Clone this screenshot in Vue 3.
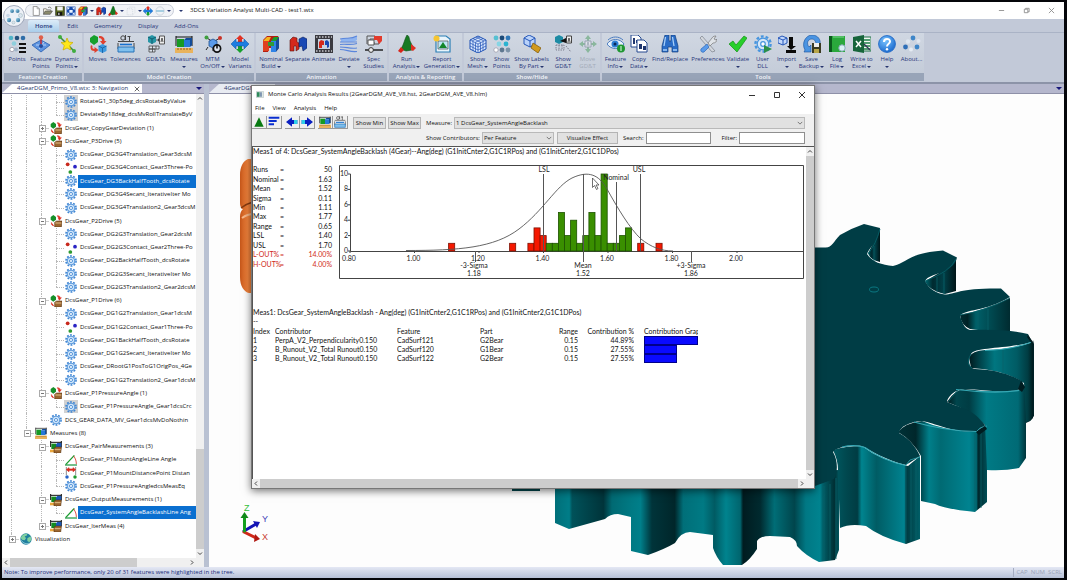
<script setup>
import { ref } from 'vue'

const quick = [
  { i: 'doc' }, { i: 'open' }, { i: 'disk' }, { i: 'fit' }, { i: 'build', d: 1 },
  { i: 'separate' }, { i: 'run', d: 1 }, { i: 'ghost', d: 1 }, { i: 'variants' }, { i: 'sphere', d: 1 }
]
const tabs = ['Home', 'Edit', 'Geometry', 'Display', 'Add-Ons']
const groups = [
  { name: 'Feature Creation', items: [
    { i: 'points', l: ['Points'], w: 24 },
    { i: 'feature', l: ['Feature', 'Points'], w: 24 },
    { i: 'dynamic', l: ['Dynamic', 'Points'], w: 28, d: 1 }] },
  { name: 'Model Creation', items: [
    { i: 'moves', l: ['Moves'], w: 25 },
    { i: 'tol', l: ['Tolerances'], w: 31 },
    { i: 'gdt', l: ['GD&Ts'], w: 29 },
    { i: 'measure', l: ['Measures', ''], w: 28, d: 1 },
    { i: 'mtm', l: ['MTM', 'On/Off'], w: 29, d: 1 },
    { i: 'variants', l: ['Model', 'Variants'], w: 26 }] },
  { name: 'Animation', items: [
    { i: 'build', l: ['Nominal', 'Build'], w: 28, d: 1 },
    { i: 'separate', l: ['Separate'], w: 25 },
    { i: 'animate', l: ['Animate'], w: 27 },
    { i: 'deviate', l: ['Deviate', ''], w: 24, d: 1 },
    { i: 'spec', l: ['Spec', 'Studies'], w: 25 }] },
  { name: 'Analysis & Reporting', items: [
    { i: 'run', l: ['Run', 'Analysis'], w: 33, d: 1 },
    { i: 'report', l: ['Report', 'Generation'], w: 38, d: 1 }] },
  { name: 'Show/Hide', items: [
    { i: 'mesh', l: ['Show', 'Mesh'], w: 25, d: 1 },
    { i: 'points2', l: ['Show', 'Points'], w: 23 },
    { i: 'labels', l: ['Show Labels', 'By Part'], w: 37, d: 1 },
    { i: 'showgdt', l: ['Show', 'GD&T'], w: 26 },
    { i: 'movegdt', l: ['Move', 'GD&T'], w: 23, off: true }] },
  { name: 'Tools', items: [
    { i: 'eye', l: ['Feature', 'Info'], w: 25, d: 1 },
    { i: 'copy', l: ['Copy', 'Data'], w: 22, d: 1 },
    { i: 'find', l: ['Find/Replace'], w: 40 },
    { i: 'prefs', l: ['Preferences'], w: 36 },
    { i: 'check', l: ['Validate', ''], w: 24, d: 1 },
    { i: 'dll', l: ['User', 'DLL'], w: 25 },
    { i: 'import', l: ['Import', ''], w: 23, d: 1 },
    { i: 'backup', l: ['Save', 'Backup'], w: 27, d: 1 },
    { i: 'log', l: ['Log', 'File'], w: 24, d: 1 },
    { i: 'excel', l: ['Write to', 'Excel'], w: 25, d: 1 },
    { i: 'help', l: ['Help', ''], w: 26, d: 1 },
    { i: 'about', l: ['About...'], w: 23 }] }
]

// Guide codes: | line, t branch, l last branch, + / - expander, m last open expander, p last closed expander
const tree = [
  ['|||t', 'gear', 'RotateG1_30p5deg_dcsRotateByValue', 'grey'],
  ['|||l', 'gear', 'DeviateBy18deg_dcsMvRollTranslateByV', 'grey'],
  ['||+', 'group', 'DcsGear_CopyGearDeviation (1)'],
  ['||-', 'group', 'DcsGear_P3Drive (5)'],
  ['|||t', 'gear', 'DcsGear_DG3G4Translation_Gear3dcsM'],
  ['|||t', 'dots', 'DcsGear_DG3G4Contact_Gear3Three-Po'],
  ['|||t', 'gear', 'DcsGear_DG3BackHalfTooth_dcsRotate', 'sel'],
  ['|||t', 'gear', 'DcsGear_DG3G4Secant_IterativeIter Mo'],
  ['|||l', 'gear', 'DcsGear_DG3G4Translation2_Gear3dcsM'],
  ['||-', 'group', 'DcsGear_P2Drive (5)'],
  ['|||t', 'gear', 'DcsGear_DG2G3Translation_Gear2dcsM'],
  ['|||t', 'dots', 'DcsGear_DG2G3Contact_Gear2Three-Po'],
  ['|||t', 'gear', 'DcsGear_DG2BackHalfTooth_dcsRotate'],
  ['|||t', 'gear', 'DcsGear_DG2G3Secant_IterativeIter Mo'],
  ['|||l', 'gear', 'DcsGear_DG2G3Translation2_Gear2dcsM'],
  ['||-', 'group', 'DcsGear_P1Drive (6)'],
  ['|||t', 'gear', 'DcsGear_DG1G2Translation_Gear1dcsM'],
  ['|||t', 'dots', 'DcsGear_DG1G2Contact_Gear1Three-Po'],
  ['|||t', 'gear', 'DcsGear_DG1BackHalfTooth_dcsRotate'],
  ['|||t', 'gear', 'DcsGear_DG1G2Secant_IterativeIter Mo'],
  ['|||t', 'gear', 'DcsGear_DRootG1PosToG1OrigPos_4Ge'],
  ['|||l', 'gear', 'DcsGear_DG1G2Translation2_Gear1dcsM'],
  ['||-', 'group', 'DcsGear_P1PressureAngle (1)'],
  ['|||l', 'gear', 'DcsGear_P1PressureAngle_Gear1dcsCrc', 'grey'],
  ['||l', 'gear', 'DCS_GEAR_DATA_MV_Gear1dcsMvDoNothin'],
  ['|m', 'measure', 'Measures (8)'],
  ['| -', 'mgroup', 'DcsGear_PairMeasurements (3)'],
  ['| |t', 'angle', 'DcsGear_P1MountAngleLine Angle'],
  ['| |t', 'dist', 'DcsGear_P1MountDistancePoint Distan'],
  ['| |l', 'gear', 'DcsGear_P1PressureAngledcsMeasEq'],
  ['| -', 'mgroup', 'DcsGear_OutputMeasurements (1)'],
  ['| |l', 'angle', 'DcsGear_SystemAngleBacklashLine Ang', 'sel'],
  ['| p', 'mgroup', 'DcsGear_IterMeas (4)'],
  ['p', 'globe', 'Visualization']
].map(([g, icon, text, state]) => ({ g: g.split(''), icon, text, state }))
const guideClass = {
  '|': 'g-line', ' ': '', t: 'g-line g-arm', l: 'g-half g-arm',
  '+': 'g-line g-box g-plus', '-': 'g-line g-box', m: 'g-half g-box', p: 'g-half g-box g-plus'
}

const stats = [
  ['Runs', '50'], ['Nominal', '1.63'], ['Mean', '1.52'], ['Sigma', '0.11'], ['Min', '1.11'], ['Max', '1.77'],
  ['Range', '0.65'], ['LSL', '1.40'], ['USL', '1.70'], ['L-OUT%', '14.00%', true], ['H-OUT%', '4.00%', true]
]

// Histogram bins: [bin offset from the first bin, count, out of spec]
const bins = [
  [-14, 1, 1], [-4, 1, 1], [-1, 1, 1], [0, 3, 1], [1, 2, 1], [2, 1], [3, 1], [4, 5], [5, 2], [6, 4], [7, 1], [8, 2],
  [9, 5], [10, 2], [11, 10], [12, 1], [13, 1], [14, 2], [15, 3], [17, 1, 1], [20, 1, 1]
].map(([k, n, red]) => ({ x: 195 + 6.1 * k, y: 86 - 7.7 * n, h: 7.7 * n, red }))
const yTicks = [0, 2, 4, 6, 8, 10].map(v => ({ v, y: 86 - 7.7 * v }))
const xTicks = [0, 1, 2, 3, 4, 5, 6].map(k => ({ v: (0.8 + 0.2 * k).toFixed(2), x: 11 + 64.5 * k }))
const marks = [
  { x: 204, a: 9, b: 86 }, { x: 244, a: 9, b: 97 }, { x: 277, a: 17, b: 86 },
  { x: 301, a: 9, b: 86 }, { x: 136, a: 86, b: 97 }, { x: 352, a: 86, b: 97 }
]

const contributors = [
  [1, 'PerpA_V2_Perpendicularity0.150', 'CadSurf121', 'G2Bear', '0.15', 44.89],
  [2, 'B_Runout_V2_Total Runout0.150', 'CadSurf120', 'G1Bear', '0.15', 27.55],
  [3, 'B_Runout_V2_Total Runout0.150', 'CadSurf122', 'G2Bear', '0.15', 27.55]
]
const search = ref('')
const filter = ref('')
</script>

<template>
  <div class="screen">
    <svg class="defs" aria-hidden="true">
      <defs>
        <linearGradient id="ball" x1="0" y1="0" x2="1" y2="1"><stop offset="0" stop-color="#a8dcf0" /><stop offset="1" stop-color="#1b5f8e" /></linearGradient>
        <radialGradient id="hlp" cx=".4" cy=".3" r=".8"><stop offset="0" stop-color="#7ac4ff" /><stop offset="1" stop-color="#0f5fc8" /></radialGradient>
        <symbol id="i-points" viewBox="0 0 18 18"><circle cx="3" cy="3" r="2.3" fill="#4fb3c8" /><circle cx="9" cy="3" r="2.3" fill="#23507c" /><circle cx="15" cy="3" r="2.3" fill="#2e6da8" /><circle cx="6" cy="8.5" r="2.3" fill="#8ecfdd" /><circle cx="4" cy="14.5" r="2.2" fill="#fff" stroke="#889" stroke-width=".7" /><circle cx="8" cy="14.500" r="2" fill="#9fb3c6" /><path d="M11 8h7v2h-7zM11 12h7v2h-7zM11 16h7v2h-7z" fill="#111" /></symbol>
        <symbol id="i-feature" viewBox="0 0 18 18"><path d="M0 10 9 5l9 5-9 7z" fill="#5c93e0" stroke="#2b5fae" stroke-width=".8" /><path d="M4 10h10M7 14l5-7" stroke="#b9d3f7" stroke-width="1" /><path d="M9 3v6" stroke="#c22" stroke-width="1.400" /><circle cx="9" cy="2.500" r="2.200" fill="#e0604a" /><circle cx="9" cy="11" r="2" fill="#254b9b" /></symbol>
        <symbol id="i-dynamic" viewBox="0 0 18 18"><path d="m2 2 14 14" stroke="#3a8a3a" stroke-width="1.500" /><circle cx="2" cy="2" r="2" fill="#3fae3f" /><circle cx="16" cy="16" r="2" fill="#3fae3f" /><path d="m9 3 1.700 4 4.300.5-3.300 3 1 4.500L9 13l-4 2 1.300-4.500-3.300-3L7.500 7z" fill="#ffe71a" stroke="#c9aa00" stroke-width=".7" /></symbol>
        <symbol id="i-moves" viewBox="0 0 18 18"><path d="m1 3 4-3 4 2v5L5 10 1 7z" fill="#16a02c" /><path d="M10 1c4 0 6 2 5.500 5l2 0-3.500 4-3-4h2c0-2-1-3-3-3zM2 10l-.5 2c0 3 1.500 4 4 4v2l4-3-4-3v2c-2 0-2.500-1-2-3z" fill="#e0412f" /><path d="m9.500 11 4-2 4 2v5l-4 2-4-2z" fill="#3d9ae0" /><path d="m9.500 11 4 2 4-2M13.500 13v5" stroke="#155a9a" fill="none" stroke-width=".8" /></symbol>
        <symbol id="i-tol" viewBox="0 0 18 18"><circle cx="6" cy="3" r="2.200" fill="none" stroke="#444" /><path d="M8.500 0v5M12.500 1v5M10.500 1.500h3" stroke="#444" /><path d="M1 8v6M17 8v6M1 6.500h16" stroke="#444" fill="none" /><path d="M3 9.500h12" stroke="#1570d0" stroke-width="1.600" /><path d="M1 12h16v5H1z" fill="#7fc0ee" stroke="#2873b8" /></symbol>
        <symbol id="i-gdt" viewBox="0 0 18 18"><path d="m1 2 4-2 4 2v5L5 9 1 7z" fill="#2696a6" /><path d="m1 2 4 2 4-2M5 4v5" stroke="#0b4d60" fill="none" stroke-width=".8" /><path d="M9 5h2l1.500-2v4L11 5" fill="#222" stroke="#222" stroke-width=".7" /><path d="M12.500 1h5v8h-5z" fill="#eee" stroke="#555" /><path d="M14 7l1-4 1 4" stroke="#333" fill="none" stroke-width=".8" /><path d="M2 11h10v3H2zM2 14h6v3H2zM5.500 11v6M9 11v3" fill="#dde4ee" stroke="#444" stroke-width=".8" /></symbol>
        <symbol id="i-measure" viewBox="0 0 18 18"><path d="M1 1v10M17 1v10M1 2h16" stroke="#111" /><path d="M2 4h7v8H2z" fill="#169a24" /><path d="M9 5h6v7H9z" fill="#2779d8" /><path d="m9 5 2-2h6v7l-2 2V5z" fill="#124c99" /><path d="M0 13h18v5H0z" fill="#e9b35d" /><path d="M3 13v2M6 13v2M9 13v2M12 13v2M15 13v2" stroke="#7a4a08" stroke-width=".8" /></symbol>
        <symbol id="i-mtm" viewBox="0 0 18 18"><path d="M9 7 3 3M9 7l7-4M9 8v8M4 12l-2 3" stroke="#222" stroke-width="1" /><circle cx="2.500" cy="2.500" r="2" fill="#3f9f3f" /><circle cx="16" cy="3" r="2" fill="#c93226" /><path d="m5 6 4-2 4 2v5l-4 2-4-2z" fill="#5b9bea" stroke="#205090" stroke-width=".8" /><circle cx="13" cy="13.500" r="3.600" fill="#dfe5ee" stroke="#111" stroke-width="1.700" /><path d="M13 9v4.500" stroke="#111" stroke-width="1.600" /></symbol>
        <symbol id="i-variants" viewBox="0 0 18 18"><path d="m9 0 4 4h-2v3H7V4H5z" fill="#e03022" /><path d="m9 18-4-4h2v-3h4v3h2z" fill="#17a02c" /><path d="M0 9l5-5v3h8V4l5 5-5 5v-3H5v3z" fill="#1d7de0" stroke="#0d4fa0" stroke-width=".5" /></symbol>
        <symbol id="i-build" viewBox="0 0 18 18"><path d="m1 5 4-4h11l1 2v10l-4 4H9v-4H7l-1 4H1z" fill="#b31e12" /><path d="M1 6h6v10H1z" fill="#e0401f" /><path d="m1 6 4-4h4L7 6z" fill="#f5b41c" /><path d="M9 6h5v11H9z" fill="#2f83e6" /><path d="m9 6 3-4h5l-3 4z" fill="#17a02c" /><path d="m14 6 3-4v11l-3 4z" fill="#164b98" /><path d="M6 7h6v4H6z" fill="#2f9a38" /></symbol>
        <symbol id="i-separate" viewBox="0 0 18 18"><path d="m1 5 3-3 4 1v4l2 1v6l-3 2V11H5v5H1z" fill="#d4281b" stroke="#5f0d0a" stroke-width=".6" /><path d="m10 4 4-2 4 2v9l-4 3-1-5-3 1z" fill="#1948b4" stroke="#0c205b" stroke-width=".6" /></symbol>
        <symbol id="i-animate" viewBox="0 0 18 18"><path d="M0 0h18v18H0z" fill="#3a3a40" /><path d="M3 4h12v10H3z" fill="#c9d3e2" /><path d="M1 2h16M1 16h16" stroke="#c8c8cc" stroke-width="1.500" stroke-dasharray="1.500 1.500" /><path d="m4 7 2-2 3 1v4H7v3H4z" fill="#d4281b" /><path d="m10 6 2-1 2 2v5l-2 1v-3h-2z" fill="#1948b4" /></symbol>
        <symbol id="i-deviate" viewBox="0 0 18 18"><path d="M1 4c6-2 9 1 16-3v4c-7 4-10 0-16 2z" fill="#8eb4f0" /><path d="M0 4c7-2 10 1 17-3M0 7h17M0 9.500c6-1 10 1 17-1M0 12c7 0 10 2 17 1M0 14.500c7 0 10 3 17 2" stroke="#5a86dc" stroke-width="1.200" fill="none" /></symbol>
        <symbol id="i-spec" viewBox="0 0 18 18"><path d="M2 1h8v3H5v4h5M2 1v8M7 9h7V6" fill="none" stroke="#555" /><path d="M9 1h8v5l-3 3-2-4H9z" fill="#e23a2c" /><path d="M3 5h6v5H3z" fill="#fff" stroke="#555" /><path d="M0 15h18" stroke="#222" stroke-width="1.500" /><circle cx="6" cy="15" r="2.400" fill="#eee" stroke="#333" /></symbol>
        <symbol id="i-run" viewBox="0 0 18 18"><path d="M9 0c2 1 2 2 3 6l3 6-1 3-6 1-5-2C6 9 7 3 9 0z" fill="#177a22" stroke="#0b4d14" stroke-width=".6" /><path d="m0 16 3-4 3 3-3 3z" fill="#d8241a" /><path d="m13 9 5 4-3 3-2-1z" fill="#e03024" /></symbol>
        <symbol id="i-report" viewBox="0 0 18 18"><path d="M3 1h10l4 3v13H3z" fill="#e8f4fb" stroke="#2b7fb5" stroke-width="1.200" /><path d="M5 6h10v8H5z" fill="#bfe6f5" stroke="#333" stroke-width=".6" /><path d="m6 13 4-6 4 6z" fill="#14852a" /><circle cx="3.500" cy="3.500" r="3" fill="#f6c531" /></symbol>
        <symbol id="i-mesh" viewBox="0 0 18 18"><path d="m1 5 8-4 8 4v9l-8 4-8-4z" fill="#dbe9ff" stroke="#1e50b4" /><path d="m1 5 8 4 8-4M9 9v9M1 8l8 4 8-4M1 11l8 4 8-4M4 6.500v9M6.500 8v9M11.500 8v9M14 6.500v9M4 3.500l8 4M7 2l8 4M14 3.500l-8 4M11 2 3 6" stroke="#1e50b4" fill="none" stroke-width=".7" /></symbol>
        <symbol id="i-points2" viewBox="0 0 18 18"><circle cx="3" cy="3" r="2.400" fill="#55c0d2" /><circle cx="9" cy="3" r="2.400" fill="#1b4a78" /><circle cx="15" cy="3" r="2.400" fill="#2e78b8" /><circle cx="6" cy="9" r="2.400" fill="#86d5e4" /><circle cx="13" cy="9" r="2.400" fill="#2bb3d0" /><circle cx="3" cy="15" r="2.200" fill="#fff" stroke="#889" stroke-width=".6" /><circle cx="9" cy="15" r="2.400" fill="#5f7890" /><circle cx="15" cy="15" r="2.400" fill="#7d93a8" /></symbol>
        <symbol id="i-labels" viewBox="0 0 18 18"><path d="m1 3 5-3 6 3v6l-5 3-6-3z" fill="#b9d2fa" stroke="#2456b8" /><path d="m1 3 6 3 5-3M7 6v6" stroke="#2456b8" fill="none" /><path d="m10 8 8 5-3 5-7-5z" fill="#d29a1e" stroke="#7a5506" stroke-width=".7" /></symbol>
        <symbol id="i-showgdt" viewBox="0 0 18 18"><path d="m1 2 4-2 4 2v5L5 9 1 7z" fill="#1d8ba4" /><path d="m6 6 6-3v5z" fill="#111" /><path d="M12.500 1h5v7h-5z" fill="#eee" stroke="#444" /><path d="M14 7l1-4 1 4" stroke="#333" fill="none" stroke-width=".8" /><path d="M2 10h8v5H2zM5 10v5M8 10v5M12 11l5 6" fill="none" stroke="#778" stroke-width=".9" stroke-dasharray="1.500 1" /></symbol>
        <symbol id="i-movegdt" viewBox="0 0 18 18"><path d="m9 0 3 4h-2v2H8V4H6zM9 18l-3-4h2v-2h2v2h2zM0 9l4-3v2h2v2H4v2zM18 9l-4 3v-2h-2V8h2V6z" fill="#8ab79d" /><path d="M6 6h6v6H6z" fill="#dfe3ea" stroke="#99a3b2" /><path d="M8 11l1-4 1 4" stroke="#99a3b2" fill="none" stroke-width=".8" /></symbol>
        <symbol id="i-eye" viewBox="0 0 18 18"><path d="M0 9c4-6 13-6 17 0-4 6-13 6-17 0z" fill="#e7f1fb" stroke="#4b7cc0" stroke-width="1" /><path d="M1 5c4-4 11-4 15 0" stroke="#4b7cc0" fill="none" /><circle cx="8" cy="9" r="3.500" fill="#2c7fd6" /><circle cx="8" cy="9" r="1.500" fill="#0b2a5c" /><circle cx="14" cy="13.500" r="4" fill="#1e9632" /><path d="M14 11v5" stroke="#b8e8c0" stroke-width="1.300" /></symbol>
        <symbol id="i-copy" viewBox="0 0 18 18"><path d="M1 0h7l3 3v9H1z" fill="#fff" stroke="#25498f" /><path d="M3 3h2v6H3zM6 5h3v3H6z" fill="#20366e" /><path d="M7 5h7l3 3v9H7z" fill="#fff" stroke="#25498f" /><path d="M9 9h3v5H9zM13 11h3v4h-3z" fill="#20366e" /></symbol>
        <symbol id="i-find" viewBox="0 0 18 18"><path d="M4 0h4v5l1 2 1-2V0h4l3 11v6h-6v-5H7v5H1v-6z" fill="#2a6cc6" stroke="#143f80" stroke-width=".7" /><path d="M4.500 2 3 11M11.500 2l1.500 9M2 15h4M12 15h4" stroke="#a8d0fa" stroke-width="1.300" /></symbol>
        <symbol id="i-prefs" viewBox="0 0 18 18"><path d="M3 1 1 3l12 14 3-1z" fill="#d3d7dd" stroke="#7d838d" stroke-width=".7" /><path d="M8 9 2 14c-1 2 1 4 3 3l5-5z" fill="#5b9bea" stroke="#1a5bb4" stroke-width=".6" /><path d="m9 8 4-5c1-2 3-2 4-2l-2 3 2 1 1-1c0 3-2 4-4 4l-3 3z" fill="#dfe3e8" stroke="#777" stroke-width=".7" /></symbol>
        <symbol id="i-check" viewBox="0 0 18 18"><path d="m0 9 4-3 3 4 8-9 3 2L8 17z" fill="#27cf2b" stroke="#129016" stroke-width=".7" /></symbol>
        <symbol id="i-gear" viewBox="0 0 18 18"><circle cx="9" cy="9" r="7.600" fill="none" stroke="#3f86d4" stroke-width="2.400" stroke-dasharray="2.800 1.975" /><circle cx="9" cy="9" r="5.800" fill="#cfe6fb" stroke="#3f86d4" stroke-width="1.300" /><circle cx="9" cy="9" r="2.300" fill="#fff" stroke="#3f86d4" stroke-width="1.300" /></symbol>
        <symbol id="i-dll" viewBox="0 0 18 18"><circle cx="9" cy="9" r="7.600" fill="none" stroke="#4795df" stroke-width="2.400" stroke-dasharray="2.800 1.975" /><circle cx="9" cy="9" r="5.800" fill="#d5e7f9" stroke="#4795df" stroke-width="1.200" /><circle cx="9" cy="9" r="2.300" fill="#fff" stroke="#4795df" stroke-width="1.200" /><path d="m10 10 8 4-8 4z" fill="#2a8f48" /></symbol>
        <symbol id="i-import" viewBox="0 0 18 18"><path d="m0 3 4-2 5 2v5l-4 2-5-2z" fill="#c2d8fb" stroke="#2456b8" /><path d="m0 3 5 2 4-2M5 5v5" stroke="#2456b8" fill="none" /><path d="M11 2h4v9h3l-5 4-4-4h2zM8 15h10v3H8z" fill="#0a0a0a" /></symbol>
        <symbol id="i-backup" viewBox="0 0 18 18"><path d="M2 15C-2 8 3 0 9 0s9 5 8 9h-4c0-3-2-5-4-5-4 0-6 4-3 8l2-2v7H1z" fill="#4a94e2" stroke="#154f9a" stroke-width=".6" /><path d="M9 8h9v10H9z" fill="#3a3a22" /><path d="M11 8h5v4h-5z" fill="#eee" /><path d="M11 14h5v4h-5z" fill="#b8a64a" /></symbol>
        <symbol id="i-log" viewBox="0 0 18 18"><path d="M1 1h16v16H1z" fill="#2aa83c" /><path d="M1 1h3v16H1z" fill="#0b5a1d" /><path d="M5 2h11" stroke="#7bd48d" /><circle cx="14" cy="13" r="3.200" fill="#d8f1f4" stroke="#8ab" /></symbol>
        <symbol id="i-excel" viewBox="0 0 18 18"><path d="M9 2h9v14H9z" fill="#f2f7f3" stroke="#1d7044" /><path d="M11 5h6M11 8h6M11 11h6M11 14h6" stroke="#1d8048" stroke-width="1.400" /><path d="m0 2 11-2v18L0 16z" fill="#17653b" /><path d="m3 6 5 6M8 6l-5 6" stroke="#fff" stroke-width="1.500" /><path d="m11 9 6 6" stroke="#335" stroke-width="1.200" /></symbol>
        <symbol id="i-help" viewBox="0 0 18 18"><circle cx="9" cy="9" r="8.400" fill="url(#hlp)" stroke="#2a6fc8" stroke-width="1" /><path d="M6 7c0-4 6-4 6-.5C12 9 9 8.500 9 11.500" stroke="#fff" stroke-width="2" fill="none" /><circle cx="9" cy="14.200" r="1.200" fill="#fff" /></symbol>
        <symbol id="i-about" viewBox="0 0 18 18"><circle cx="10" cy="3" r="2.400" fill="#3f86c8" /><circle cx="15.500" cy="6" r="2" fill="#dfe6ef" /><circle cx="5" cy="6.500" r="2.200" fill="#dfe6ef" /><circle cx="2.500" cy="12" r="2.400" fill="#2f6fb8" /><circle cx="8" cy="14.500" r="2" fill="#e6ecf3" /><circle cx="14" cy="12" r="2.400" fill="#3f86c8" /></symbol>
        <symbol id="i-doc" viewBox="0 0 18 18"><path d="M4 1h7l4 4v12H4z" fill="#fff" stroke="#777" stroke-width="1.300" /><path d="M11 1v4h4" fill="none" stroke="#777" /></symbol>
        <symbol id="i-open" viewBox="0 0 18 18"><path d="M1 15V5h5l1 2h7v3" fill="#fffbe8" stroke="#666" stroke-width="1.300" /><path d="m1 15 3-6h13l-4 6z" fill="#8b8a6c" stroke="#555" stroke-width="1.200" /><path d="M9 3c3-2 5-1 6 2" fill="none" stroke="#555" stroke-width="1.200" /></symbol>
        <symbol id="i-disk" viewBox="0 0 18 18"><path d="M1 1h16v16H1z" fill="#53631c" stroke="#222" /><path d="M4 1h10v7H4z" fill="#f3f3f3" /><path d="M4 11h9v6H4z" fill="#111" /><path d="M6 12h2v4H6z" fill="#eee" /></symbol>
        <symbol id="i-fit" viewBox="0 0 18 18"><path d="M1 1h16v16H1z" fill="#1a4eb0" /><path d="m2 2 5 1-4 4zM16 2l-5 1 4 4zM2 16l1-5 4 4zM16 16l-5-1 4-4zM6 7h6v5H6z" fill="#eaf3ff" /></symbol>
        <symbol id="i-ghost" viewBox="0 0 18 18"><path d="M2 5h10v11H2zM2 5l4-3h10v10l-4 4" fill="none" stroke="#c5ccd6" stroke-dasharray="2 1.500" /></symbol>
        <symbol id="i-sphere" viewBox="0 0 18 18"><circle cx="9" cy="9" r="7.500" fill="#f0f3f7" stroke="#b5becb" /><path d="M2 9h14" stroke="#4ea1c8" stroke-width="1.600" /></symbol>
        <symbol id="i-group" viewBox="0 0 18 18"><path d="m1 3 4-3 4 3v4L5 10 1 7z" fill="#15912a" /><path d="M11 1c3 0 4 1 4 3h2l-3 4-2-4h1c0-1-1-2-2-2zM2 11c0 4 1 5 4 5" fill="#dd2a1c" stroke="#dd2a1c" stroke-width=".8" /><path d="m7 11 3-2h8v2l-1 7H7z" fill="#9c6630" stroke="#4c2c0c" stroke-width=".8" /><path d="M8 12h9" stroke="#e2bd86" stroke-width="1.500" /></symbol>
        <symbol id="i-mgroup" viewBox="0 0 18 18"><path d="M1 0v9M17 0v9M1 2h16" stroke="#111" stroke-width="1.500" /><path d="M2 4h7v8H2z" fill="#128a20" /><path d="m9 5 2-2h6v8H9z" fill="#1b58b4" /><path d="M0 13h9v4H0z" fill="#e9a63d" /><path d="m6 11 3-2h8v2l-1 7H6z" fill="#9c6630" stroke="#4c2c0c" stroke-width=".8" /><path d="M7 13h9" stroke="#e2bd86" stroke-width="1.500" /></symbol>
        <symbol id="i-dots" viewBox="0 0 18 18"><circle cx="4" cy="3.500" r="2.800" fill="#c8281c" /><circle cx="15" cy="7" r="2.800" fill="#2a24c4" /><circle cx="8" cy="15" r="2.800" fill="#2c9a30" /></symbol>
        <symbol id="i-angle" viewBox="0 0 18 18"><path d="M1 16 14 2" stroke="#189a2c" stroke-width="2" /><path d="M0 16.500h18" stroke="#2f9f50" stroke-width="2" /><path d="M13 3c3 4 4 8 4 12" stroke="#d8281c" stroke-width="1.200" fill="none" /></symbol>
        <symbol id="i-dist" viewBox="0 0 18 18"><path d="M2 0v12M16 0v12" stroke="#555" /><path d="M2 4l4-3v2h6V1l4 3-4 3V5H6v2z" fill="#d8281c" stroke="#d8281c" /><circle cx="3" cy="15" r="2.600" fill="#2563c8" /><circle cx="15" cy="15" r="2.600" fill="#1f9a30" /></symbol>
        <symbol id="i-globe" viewBox="0 0 18 18"><circle cx="9" cy="9" r="8.500" fill="#1f7f9e" /><path d="M3 4c3-3 6-3 8-3l-1 3-3 1 2 3-2 3-4-1-2-3zM11 8l5-3 1 5-3 4-3-2z" fill="#7fd0a0" /><path d="M2 11c3 5 8 6 12 4" stroke="#bfe9f2" fill="none" /></symbol>
        <symbol id="i-win" viewBox="0 0 18 18"><path d="M0 1h18v16H0z" fill="#dfe9e6" stroke="#9aa" /><path d="M1 3h7v12H1z" fill="#2f8a5c" /><path d="M9 3h5v12H9z" fill="#3f5f8e" opacity=".6" /></symbol>
        <symbol id="i-tri" viewBox="0 0 18 18"><path d="m9 2 7 14H2z" fill="#087a12" /></symbol>
        <symbol id="i-bars" viewBox="0 0 18 18"><path d="M1 1h16v3H1zM1 6h12v3H1zM1 11h8v3H1z" fill="#0a2ed0" /></symbol>
        <symbol id="i-left" viewBox="0 0 18 18"><path d="m0 9 9-7v4h8v6H9v4z" fill="#0a1fc0" /><path d="M12 6h5v6h-5z" fill="#2fd0e8" /></symbol>
        <symbol id="i-right" viewBox="0 0 18 18"><path d="m18 9-9-7v4H1v6h8v4z" fill="#0a1fc0" /><path d="M1 6h5v6H1z" fill="#2fd0e8" /></symbol>
      </defs>
    </svg>

    <div class="app">
      <header class="titlebar">
        <button class="orb" aria-label="Application menu">
          <svg viewBox="0 0 22 22"><circle cx="11" cy="11" r="10.500" fill="#edf1f7" stroke="#8f99ad" stroke-width=".8" /><circle cx="9" cy="6" r="2" fill="url(#ball)" /><circle cx="14.500" cy="6" r="2" fill="url(#ball)" /><circle cx="5" cy="10.500" r="1.800" fill="#cbd8e8" /><circle cx="17.500" cy="10.500" r="2" fill="#dbe4ef" stroke="#8aa" stroke-width=".4" /><circle cx="6" cy="15" r="2.200" fill="url(#ball)" /><circle cx="10.500" cy="17.500" r="1.500" fill="#dbe4ef" stroke="#8aa" stroke-width=".4" /><circle cx="15" cy="15" r="2.200" fill="url(#ball)" /></svg>
        </button>
        <div class="quick">
          <button v-for="q in quick" :key="q.i" class="qbtn" :class="{ drop: q.d }" :aria-label="q.i">
            <svg class="qi"><use :href="'#i-' + q.i" /></svg><span v-if="q.d" class="caret"></span>
          </button>
        </div>
        <span class="caret customise"></span>
        <h1 class="apptitle">3DCS Variation Analyst Multi-CAD - test1.wtx</h1>
        <div class="winbtns main">
          <button aria-label="Minimize"><svg viewBox="0 0 8 8"><path d="M1 4h6" /></svg></button>
          <button aria-label="Restore"><svg viewBox="0 0 8 8"><path d="M1.500 2.500h4v4h-4zM3 2.500v-1h4v4H5.500" /></svg></button>
          <button aria-label="Close"><svg viewBox="0 0 8 8"><path d="m1 1 6 6M7 1 1 7" /></svg></button>
        </div>
      </header>

      <nav class="tabs">
        <button v-for="(t, n) in tabs" :key="t" :class="{ on: n === 0 }">{{ t }}</button>
      </nav>

      <div class="ribbon">
        <section v-for="g in groups" :key="g.name" class="group">
          <div class="items">
            <button v-for="b in g.items" :key="b.i" class="rbtn" :class="{ off: b.off }" :style="{ width: b.w + 'px' }">
              <svg class="ri"><use :href="'#i-' + b.i" /></svg>
              <span v-for="(l, n) in b.l" :key="n" class="lab">{{ l }}<i v-if="b.d && n === b.l.length - 1" class="caret"></i></span>
            </button>
          </div>
          <h2>{{ g.name }}</h2>
        </section>
      </div>

      <main class="work">
        <aside class="side">
          <div class="doctabs">
            <span class="doctab on">4GearDGM_Primo_V8.wtx: 3: Navigation<button class="tabx" aria-label="Close tab"><svg viewBox="0 0 8 8"><path d="m1 1 6 6M7 1 1 7" /></svg></button></span>
            <span class="caret big"></span>
          </div>
          <div class="sidebody">
            <ul class="tree">
              <li v-for="(r, n) in tree" :key="n">
                <span v-for="(c, k) in r.g" :key="k" class="guide" :class="guideClass[c]"></span>
                <span class="ticon" :class="r.state"><svg><use :href="'#i-' + r.icon" /></svg></span>
                <span class="ttext" :class="r.state">{{ r.text }}</span>
              </li>
            </ul>
            <div class="vbar tall">
              <svg viewBox="0 0 8 8"><path d="m2 5 2-2 2 2" /></svg><span class="gap"></span><span class="thumb"></span><svg viewBox="0 0 8 8"><path d="m2 3 2 2 2-2" /></svg>
            </div>
          </div>
          <div class="hbar">
            <svg viewBox="0 0 8 8"><path d="M5 2 3 4l2 2" /></svg><span class="thumb part"></span><span class="rest"></span><svg viewBox="0 0 8 8"><path d="m3 2 2 2-2 2" /></svg><span class="corner"></span>
          </div>
        </aside>

        <section class="view">
          <div class="doctabs second"><span class="doctab">4GearDGM</span><span class="caret big"></span></div>
          <svg class="scene" viewBox="209 94 855 473" preserveAspectRatio="xMinYMin meet" aria-label="Gear model">
            <defs>
              <linearGradient id="or" x1="0" x2="1"><stop offset="0" stop-color="#c4561a" /><stop offset=".35" stop-color="#f5853d" /><stop offset="1" stop-color="#e8742c" /></linearGradient>
              <linearGradient id="s1" x1="0" x2="1"><stop offset="0" stop-color="#006a72" /><stop offset=".25" stop-color="#002a30" /><stop offset=".6" stop-color="#014048" /><stop offset="1" stop-color="#001518" /></linearGradient>
              <linearGradient id="s3" x1="0" x2="1"><stop offset="0" stop-color="#002c32" /><stop offset=".15" stop-color="#002226" /><stop offset=".32" stop-color="#006069" /><stop offset="1" stop-color="#002b30" /></linearGradient>
              <linearGradient id="s4" x1="0" x2="1"><stop offset="0" stop-color="#00191d" /><stop offset=".15" stop-color="#003e45" /><stop offset=".4" stop-color="#007680" /><stop offset=".75" stop-color="#005b64" /><stop offset=".92" stop-color="#003c42" /><stop offset="1" stop-color="#001a1d" /></linearGradient>
              <linearGradient id="s5" x1="0" x2="1"><stop offset="0" stop-color="#001a1d" /><stop offset=".12" stop-color="#00454c" /><stop offset=".28" stop-color="#003c43" /><stop offset=".5" stop-color="#007a85" /><stop offset=".9" stop-color="#006a75" /><stop offset="1" stop-color="#00343a" /></linearGradient>
              <linearGradient id="s6" x1="0" x2="1"><stop offset="0" stop-color="#003238" /><stop offset=".2" stop-color="#00272b" /><stop offset=".35" stop-color="#007f8a" /><stop offset=".48" stop-color="#006a73" /><stop offset=".8" stop-color="#008390" /><stop offset=".88" stop-color="#006a74" /><stop offset=".9" stop-color="#00282d" /><stop offset="1" stop-color="#004e56" /></linearGradient>
              <linearGradient id="s7" x1="0" x2="1"><stop offset="0" stop-color="#005a62" /><stop offset=".15" stop-color="#00484f" /><stop offset=".28" stop-color="#003c43" /><stop offset=".33" stop-color="#00848f" /><stop offset=".5" stop-color="#005c64" /><stop offset=".82" stop-color="#008390" /><stop offset=".84" stop-color="#003a40" /><stop offset="1" stop-color="#005e67" /></linearGradient>
              <linearGradient id="bt" gradientUnits="userSpaceOnUse" x1="555" x2="840" y1="0" y2="0">
                <stop offset="0" stop-color="#006f79" /><stop offset=".05" stop-color="#007d88" /><stop offset=".06" stop-color="#00525a" /><stop offset=".17" stop-color="#00343a" /><stop offset=".2" stop-color="#006a73" /><stop offset=".27" stop-color="#007a84" /><stop offset=".3" stop-color="#007f8a" /><stop offset=".34" stop-color="#00343a" /><stop offset=".42" stop-color="#00262a" /><stop offset=".45" stop-color="#006f79" /><stop offset=".52" stop-color="#007a84" /><stop offset=".56" stop-color="#005b63" /><stop offset=".6" stop-color="#00838e" /><stop offset=".65" stop-color="#00656e" /><stop offset=".66" stop-color="#001c20" /><stop offset=".72" stop-color="#002a2f" /><stop offset=".77" stop-color="#006d76" /><stop offset=".84" stop-color="#00454c" /><stop offset=".88" stop-color="#007884" /><stop offset=".93" stop-color="#00838f" /><stop offset=".94" stop-color="#005f68" /><stop offset=".98" stop-color="#002f34" /><stop offset="1" stop-color="#005f68" />
              </linearGradient>
            </defs>
            <path d="M262 159h-14c-5 2-8 8-8 16v28c0 4 2 6 3 6-2 2-3 4-3 8v60c0 9 4 15 9 16h13z" fill="url(#or)" />
            <path d="M241 208c4-3 8-5 12-6" stroke="#8a3c10" fill="none" stroke-width="1.500" />
            <path d="M242 218c4-3 8-4 12-4" stroke="#f9b889" fill="none" stroke-width="2" />
            <path d="M512 487h28v4h-28z" fill="#00474c" />
            <path d="M555 480V523L569 529 605 519Q610 514 618 514L631 517V551L648 555Q665 549 675 543 681 532 690 532L713 535V548Q716 557 723 565H742Q750 560 757 549V541Q760 536 770 536L790 537Q797 540 797 546 806 556 819 562L835 560 839 550V470z" fill="url(#bt)" />
            <g>
              <path d="M833 450Q845 446 862 446 880 460 908 466L920 456V539L906 544Q880 537 866 526 850 523 840 528L838 470Q838 460 833 450z" fill="url(#s7)" />
              <path d="M898 432Q905 423 922 421 945 431 976 432L985 425 987 428V502L975 512Q945 509 935 504L921 501V456Q912 440 898 432z" fill="url(#s6)" />
              <path d="M1030 421 1026 423V386L1033 340 1034 344V416z" fill="#002126" />
              <path d="M947 402Q955 389 965 389 995 393 1020 390L1026 385V458L1019 468Q1005 471 987 470L985 425Q972 411 947 402z" fill="url(#s5)" />
              <path d="M969 357Q972 351 985 350 1010 350 1033 342V418L1030 421 1026 422 1024 383Q1005 370 971 368z" fill="url(#s4)" />
              <path d="M960 315Q985 310 1010 298V331Q985 331 970 329 961 325 960 315z" fill="url(#s3)" />
              <path d="M925 281Q950 268 956 257V291L945 294Q928 290 925 281z" fill="url(#s1)" />
              <path d="M868 253Q874 243 880 228V262Q870 260 868 253z" fill="url(#s1)" />
            </g>
            <path d="M810 247.500H825C832 248 833 242 840 235Q852 228 864 224L880 228C879 242 869 247 867 254 872 262 882 265 893 266 907 263 908 253 943 250.500L957 257.500C953 275 930 272 925 281 929 289 937 294 945 294.500 955 294 960 288 1001 288.500L1010 297C985 312 964 309 960 316 963 325 966 330 971 330 995 329 1010 330 1028 334L1032 342C1008 349 975 347 971 354 967 363 970 368 975 369 1000 370 1012 376 1022 381L1025 388C1008 394 985 390 965 389 954 389 947 398 947 402 960 408 972 408 985 425L976 432C950 432 935 423 922 421 908 422 900 427 899 433 912 440 917 450 920 456L906 465C885 460 870 450 862 446 848 445 835 448 833 452 838 460 838 473 834 479L815 486H800V247.500z" fill="#003d45" />
            <path d="M985 350.500Q1010 350 1032 342M956 389.500Q995 394 1019 390.500M914 422Q945 431 976 431.500M842 447Q855 444 865 447.500 882 460 906 465.500" fill="none" stroke="#35a8b4" stroke-width="1.200" />
            <g fill="none" stroke="#08636b" stroke-width=".8">
              <path d="M868 254Q876 244 880 229M925 281Q950 272 956 259M960 315Q985 311 1010 298M971 354Q965 364 972 368M874 246v15M937 277v15M944 273v21M978 312v17M988 309v21M1003 350v24M948 402l10-12M906 466V543M911 464V541M916 460V540M975 433V510M981 430V508M824 486V561M830 484V560M836 478V559" />
              <ellipse cx="874" cy="289.500" rx="4.500" ry="2.500" stroke="#0d8791" />
              <path d="M906 465l4-5 10-3M976 432l4-4 7-2" stroke="#35a8b4" />
            </g>
            <path d="M1028 335l5 7-1 2-5-7zM1021 381l4 6-3 5-4-3zM976 432l9-6 2 3-8 6z" fill="#001c20" />
            <g stroke-linecap="round">
              <path d="m244 531 12-7" stroke="#1414b4" stroke-width="3" /><path d="m253 521 7 1-3 6z" fill="#1414b4" />
              <path d="m244 532 12 6" stroke="#d02818" stroke-width="3" /><path d="m255 534 5 5-6 3z" fill="#b01810" />
              <path d="M244.500 531v-14" stroke="#14a01e" stroke-width="3" /><path d="m244.500 512 4 6h-8z" fill="#108a18" />
            </g>
            <g font-family="Liberation Sans, sans-serif" font-size="9"><text x="244" y="511" fill="#35c03a">Z</text><text x="262" y="522" fill="#3d3db8">Y</text><text x="262" y="540" fill="#c83c30">X</text></g>
          </svg>
        </section>

        <section class="dialog" role="dialog" aria-label="Monte Carlo Analysis Results">
          <header class="dtitle">
            <svg class="dwin"><use href="#i-win" /></svg>
            <span>Monte Carlo Analysis Results (2GearDGM_AVE_V8.hst, 2GearDGM_AVE_V8.hlm)</span>
            <div class="winbtns">
              <button aria-label="Minimize"><svg viewBox="0 0 8 8"><path d="M1 4.500h6" /></svg></button>
              <button aria-label="Maximize"><svg viewBox="0 0 8 8"><path d="M1.500 1.500h5v5h-5z" /></svg></button>
              <button aria-label="Close"><svg viewBox="0 0 8 8"><path d="m1 1 6 6M7 1 1 7" /></svg></button>
            </div>
          </header>
          <nav class="dmenu"><button>File</button><button>View</button><button>Analysis</button><button>Help</button></nav>
          <div class="dtools">
            <div class="dicons">
              <button aria-label="Run"><svg><use href="#i-tri" /></svg></button>
              <button aria-label="Sort"><svg><use href="#i-bars" /></svg></button>
              <button class="sp" aria-label="Previous"><svg><use href="#i-left" /></svg></button>
              <button aria-label="Next"><svg><use href="#i-right" /></svg></button>
              <button class="sp" aria-label="Measures"><svg><use href="#i-measure" /></svg></button>
              <button aria-label="Tolerances"><svg><use href="#i-tol" /></svg></button>
            </div>
            <button class="push">Show Min</button>
            <button class="push">Show Max</button>
            <div class="fields">
              <div class="frow">
                <label for="meas">Measure:</label>
                <span class="combo grow"><select id="meas"><option>1 DcsGear_SystemAngleBacklash</option></select><svg viewBox="0 0 8 8"><path d="m1 2.500 3 3 3-3" /></svg></span>
              </div>
              <div class="frow">
                <label for="contrib">Show Contributors:</label>
                <span class="combo per"><select id="contrib"><option>Per Feature</option></select><svg viewBox="0 0 8 8"><path d="m1 2.500 3 3 3-3" /></svg></span>
                <button class="push wide">Visualize Effect</button>
                <label for="srch" class="lsearch">Search:</label><input id="srch" v-model="search" type="text">
                <label for="filt" class="lfilter">Filter:</label><input id="filt" v-model="filter" type="text">
              </div>
            </div>
          </div>
          <div class="dbody">
            <div class="report">
              <p>Meas1 of 4: DcsGear_SystemAngleBacklash (4Gear)--Ang(deg) (G1InitCnter2,G1C1RPos) and (G1InitCnter2,G1C1DPos)</p>
              <div class="summary">
                <dl class="stats">
                  <div v-for="s in stats" :key="s[0]" :class="{ out: s[2] }"><dt>{{ s[0] }}</dt><span>=</span><dd>{{ s[1] }}</dd></div>
                </dl>
                <svg class="chart" viewBox="0 0 465 114" preserveAspectRatio="xMinYMin meet">
                  <g fill="none" stroke="#444" stroke-width="1">
                    <path d="M.5.500h464v113H.5zM11.500 9v77.500M11.500 86.500H464" />
                    <path v-for="t in yTicks" :key="'y' + t.v" :d="`M9 ${t.y}h2.500`" />
                    <path v-for="t in xTicks" :key="'x' + t.v" :d="`M${t.x} 86v2`" />
                  </g>
                  <rect v-for="b in bins" :key="b.x" :x="b.x" :y="b.y" width="6.100" :height="b.h" :fill="b.red ? '#f51800' : '#3a8f00'" :stroke="b.red ? '#7c1204' : '#1d5200'" stroke-width=".8" />
                  <path v-for="m in marks" :key="m.x" :d="`M${m.x + .5} ${m.a}V${m.b}`" stroke="#555" stroke-width="1" />
                  <path d="M67 85.500C120 85.500 155 83 180 64 204 46 217 21 233 13 250 5 260 10 268 24 278 42 291 64 302 74 312 82 322 86 334 86" fill="none" stroke="#555" stroke-width=".9" />
                  <g class="ct">
                    <text v-for="t in yTicks" :key="'l' + t.v" x="9" :y="t.y + 2" text-anchor="end">{{ t.v }}</text>
                    <text v-for="t in xTicks" :key="'m' + t.v" :x="t.x - 1" y="96" text-anchor="middle">{{ t.v }}</text>
                    <text x="205" y="7" text-anchor="middle">LSL</text><text x="300" y="7" text-anchor="middle">USL</text>
                    <text x="277" y="15" text-anchor="middle">Nominal</text>
                    <text x="135" y="103" text-anchor="middle">-3-Sigma</text><text x="135" y="111" text-anchor="middle">1.18</text>
                    <text x="244" y="103" text-anchor="middle">Mean</text><text x="244" y="111" text-anchor="middle">1.52</text>
                    <text x="352" y="103" text-anchor="middle">+3-Sigma</text><text x="352" y="111" text-anchor="middle">1.86</text>
                  </g>
                  <path d="M253.500 13v9.500l2-2 2 4 1.500-1-2-3.500h3z" fill="#fff" stroke="#333" stroke-width=".7" />
                </svg>
              </div>
              <p>Meas1: DcsGear_SystemAngleBacklash - Ang(deg) (G1InitCnter2,G1C1RPos) and (G1InitCnter2,G1C1DPos)</p>
              <p>--</p>
              <table>
                <thead><tr><th class="c1">Index</th><th class="c2">Contributor</th><th class="c3">Feature</th><th class="c4">Part</th><th class="c5 r">Range</th><th class="c6 r">Contribution %</th><th class="c7">Contribution Graph</th></tr></thead>
                <tbody>
                  <tr v-for="c in contributors" :key="c[0]">
                    <td>{{ c[0] }}</td><td>{{ c[1] }}</td><td>{{ c[2] }}</td><td>{{ c[3] }}</td><td class="r">{{ c[4] }}</td><td class="r">{{ c[5].toFixed(2) }}%</td>
                    <td class="c7"><span class="bar" :style="{ width: Math.round(c[5] / 44.89 * 100) + '%' }"></span></td>
                  </tr>
                </tbody>
              </table>
            </div>
            <div class="vbar full"><svg viewBox="0 0 8 8"><path d="m2 5 2-2 2 2" /></svg><span class="thumb"></span><svg viewBox="0 0 8 8"><path d="m2 3 2 2 2-2" /></svg></div>
          </div>
          <div class="hbar"><svg viewBox="0 0 8 8"><path d="M5 2 3 4l2 2" /></svg><span class="thumb"></span><svg viewBox="0 0 8 8"><path d="m3 2 2 2-2 2" /></svg><span class="corner"></span></div>
        </section>
      </main>

      <footer class="status"><span>Note: To improve performance, only 20 of 31 features were highlighted in the tree.</span><span class="keys">CAP&nbsp; NUM&nbsp; SCRL</span></footer>
    </div>
  </div>
</template>

<style>
html, body { background: #000; }
</style>

<style scoped>
* { box-sizing: border-box; margin: 0; padding: 0; }
.screen { height: 100vh; padding: 2px 3px 2px 2px; background: #05060a; font: 6px/9px "Open Sans", "Noto Sans", sans-serif; color: #111; overflow: hidden; }
.defs { position: absolute; width: 0; height: 0; }
button { border: 0; background: none; font: inherit; color: inherit; }
svg { display: block; }
.app { height: 100%; display: flex; flex-direction: column; background: #c2c9d8; }
.caret { display: inline-block; border: 2px solid transparent; border-top-color: #26356e; border-bottom: 0; }

.titlebar { position: relative; height: 17px; flex: none; display: flex; align-items: center; background: #fff; padding-left: 23px; }
.orb { position: absolute; left: 1px; top: 3px; z-index: 2; width: 22px; height: 22px; }
.orb svg { width: 22px; height: 22px; }
.quick { display: flex; align-items: center; width: 149px; height: 13px; padding-left: 5px; border: 1px solid #c9ced8; border-radius: 7px; background: #f1f3f7; }
.qbtn { display: flex; align-items: center; width: 12px; height: 11px; gap: 2px; }
.qbtn.drop { width: 18px; }
.qi { width: 10px; height: 10px; flex: none; }
.customise { margin-left: 5px; }
.apptitle { margin-left: 7px; font-size: 6px; font-weight: 400; color: #111; flex: 1; white-space: nowrap; }
.winbtns { display: flex; margin-left: auto; }
.winbtns button { width: 25px; display: flex; justify-content: center; }
.winbtns svg { width: 8px; height: 8px; fill: none; stroke: #333; stroke-width: 1; }
.winbtns.main svg { width: 7px; height: 7px; stroke: #8d8d8d; }

.tabs { height: 14px; flex: none; display: flex; align-items: flex-end; padding-left: 26px; border-bottom: 1px solid #aab3c6; color: #27357a; }
.tabs button { height: 12px; padding: 0 8px; }
.tabs .on { background: linear-gradient(#dcecf8, #a9cdea); border-radius: 2px 2px 0 0; padding: 0 7px; font-weight: 600; }

.ribbon { height: 49px; flex: none; display: flex; gap: 2px; padding: 0 2px 1px; }
.group { display: flex; flex-direction: column; padding: 1px 1px 0; background: linear-gradient(#d0d7e2, #c2cad7); }
.items { display: flex; flex: 1; }
.rbtn { flex: none; display: flex; flex-direction: column; align-items: center; padding-top: 1px; line-height: 7px; color: #27357a; white-space: nowrap; }
.ri { width: 18px; height: 18px; margin-bottom: 3px; }
.lab { height: 7px; display: flex; align-items: center; gap: 1px; }
.off { color: #a3abb9; }
.group h2 { height: 8px; margin: 0 -1px; background: #98a4b8; color: #f4f6fa; font-size: 6px; line-height: 8px; font-weight: 600; text-align: center; }

.work { position: relative; flex: 1; min-height: 0; display: flex; border-top: 2px solid #8c93a8; }
.side { width: 207px; flex: none; display: flex; flex-direction: column; border-right: 5px solid #b9c1d2; }
.doctabs { height: 10px; flex: none; display: flex; align-items: center; justify-content: space-between; background: #b5b7cd; border-bottom: 1px solid #8e90a8; padding-right: 2px; color: #27356a; white-space: nowrap; }
.doctab { display: flex; align-items: center; height: 9px; padding: 0 2px 0 15px; background: #e8ebf2; clip-path: polygon(10px 0, 100% 0, 100% 100%, 0 100%); }
.doctab.on { background: #fff; }
.second .doctab { padding-right: 20px; }
.tabx { margin-left: 6px; }
.tabx svg { width: 6px; height: 6px; stroke: #333; fill: none; }
.caret.big { border-width: 3px 3px 0; border-top-color: #17177a; }
.sidebody { flex: 1; min-height: 0; display: flex; background: #fff; }
.tree { flex: 1; min-width: 0; display: flex; flex-direction: column; list-style: none; padding: 1px 0 12px 2px; overflow: hidden; }
.tree li { flex: 1 1 0; min-height: 0; display: flex; align-items: center; white-space: nowrap; }
.guide { position: relative; width: 15px; flex: none; align-self: stretch; }
.g-line::before, .g-half::before { content: ""; position: absolute; left: 7px; top: 0; bottom: 0; border-left: 1px dotted #b9b9b9; }
.g-half::before { bottom: 50%; }
.g-arm::after { content: ""; position: absolute; left: 7px; right: 0; top: 50%; border-top: 1px dotted #b9b9b9; }
.g-box { background: linear-gradient(#ccc, #ccc) 100% 50% / 6px 1px no-repeat; }
.g-box::after { content: ""; position: absolute; left: 5px; top: 50%; width: 5px; height: 5px; margin-top: -3px; border: 1px solid #aaa; background: linear-gradient(#777, #777) 50% 50% / 3px 1px no-repeat, #fff; }
.g-plus::after { background: linear-gradient(#777, #777) 50% 50% / 3px 1px no-repeat, linear-gradient(#777, #777) 50% 50% / 1px 3px no-repeat, #fff; }
.ticon { flex: none; width: 14px; height: 13px; display: flex; align-items: center; justify-content: center; }
.ticon svg { width: 12px; height: 12px; }
.ticon.grey { background: #d2d2d2; }
.ttext { flex: none; padding: 2px 0 2px 2px; }
.ttext.sel { background: #0a6fd0; color: #fff; flex: 1 0 auto; }

.vbar, .hbar { flex: none; display: flex; background: #f0f0f0; }
.vbar { flex-direction: column; width: 8px; }
.hbar { height: 9px; align-items: stretch; }
.vbar svg, .hbar svg { width: 8px; height: 9px; flex: none; fill: none; stroke: #444; stroke-width: 1; }
.thumb { flex: 1; background: #cdcdcd; }
.tall .gap { flex: 340; }
.tall .thumb { flex: 98; }
.hbar .part { flex: 124; }
.hbar .rest { flex: 50; }
.corner { width: 8px; }

.view { flex: 1; min-width: 0; display: flex; flex-direction: column; background: #fdfdfd; }
.scene { width: 100%; flex: 1; min-height: 0; }

.dialog { position: absolute; left: 249px; top: 1px; width: 564px; height: 404px; display: flex; flex-direction: column; background: #f0f0f0; border: 1px solid #777; box-shadow: 0 2px 8px rgba(0, 0, 0, .55); }
.dtitle { height: 17px; flex: none; display: flex; align-items: center; gap: 4px; padding-left: 4px; background: #fff; white-space: nowrap; }
.dwin { width: 8px; height: 7px; }
.dmenu { height: 11px; flex: none; display: flex; gap: 8px; padding-left: 3px; background: #fff; }
.dtools { flex: none; height: 32px; display: flex; align-items: flex-start; padding: 2px 9px 0 0; gap: 2px; }
.dicons { display: flex; margin-right: 3px; }
.dicons button { width: 15px; height: 13px; display: flex; align-items: center; justify-content: center; border-right: 1px solid #999; border-bottom: 1px solid #999; }
.dicons .sp { margin-left: 3px; }
.dicons svg { width: 12px; height: 12px; }
.push { height: 12px; width: 33px; margin-top: 1px; background: #e1e1e1; border: 1px solid #b4b4b4; line-height: 9px; white-space: nowrap; }
.fields { flex: 1; min-width: 0; display: flex; flex-direction: column; gap: 2px; padding-left: 3px; }
.frow { display: flex; align-items: center; height: 12px; white-space: nowrap; margin-top: 1px; gap: 2px; }
.combo { position: relative; display: flex; height: 12px; }
.combo select { appearance: none; flex: 1; width: 100%; height: 12px; padding: 0 1px; font: inherit; color: inherit; background: #e1e1e1; border: 1px solid #b9b9b9; border-radius: 0; }
.combo svg { position: absolute; right: 2px; top: 3px; width: 6px; height: 6px; fill: none; stroke: #555; }
.grow { flex: 1; }
.per { width: 72px; }
.push.wide { width: 61px; margin: 0 3px 0 1px; }
.frow input { flex: 1; min-width: 0; height: 12px; border: 1px solid #8f8f8f; background: #fff; font: inherit; padding: 0 2px; }
.lfilter { margin-left: 8px; }
.dbody { flex: 1; min-height: 0; display: flex; border-top: 1px solid #555; border-left: 1px solid #555; }
.report { flex: 1; min-width: 0; background: #fff; overflow: hidden; font: 7px/9px "Lato", "Open Sans", sans-serif; }
.report p { white-space: nowrap; }
.summary { display: flex; gap: 7px; margin: 9px 2px 29px 0; }
.stats { width: 79px; height: 104px; flex: none; display: grid; grid-auto-rows: 1fr; white-space: nowrap; }
.stats > div { display: grid; grid-template-columns: 27px 1fr auto; align-items: center; }
.stats .out { color: #d02a20; }
.chart { flex: 1; min-width: 0; }
.ct { font-size: 7px; fill: #222; }
table { border-collapse: collapse; table-layout: fixed; width: 445px; margin-top: 1px; }
th, td { height: 9px; font-weight: 400; text-align: left; white-space: nowrap; overflow: hidden; }
.r { text-align: right; }
.c1 { width: 22px; } .c2 { width: 122px; } .c3 { width: 83px; } .c4 { width: 50px; } .c5 { width: 48px; } .c6 { width: 56px; }
.c7 { padding-left: 10px; }
.bar { display: block; height: 9px; background: #0a0aff; border: 1px solid #00008a; }

.status { height: 11px; flex: none; display: flex; justify-content: space-between; align-items: center; padding: 0 2px; background: linear-gradient(#e4e8f4, #b7c1d8); color: #1b2c78; white-space: nowrap; }
.keys { color: #9aa3b8; border-left: 1px solid #a3abc0; padding-left: 2px; }
</style>
